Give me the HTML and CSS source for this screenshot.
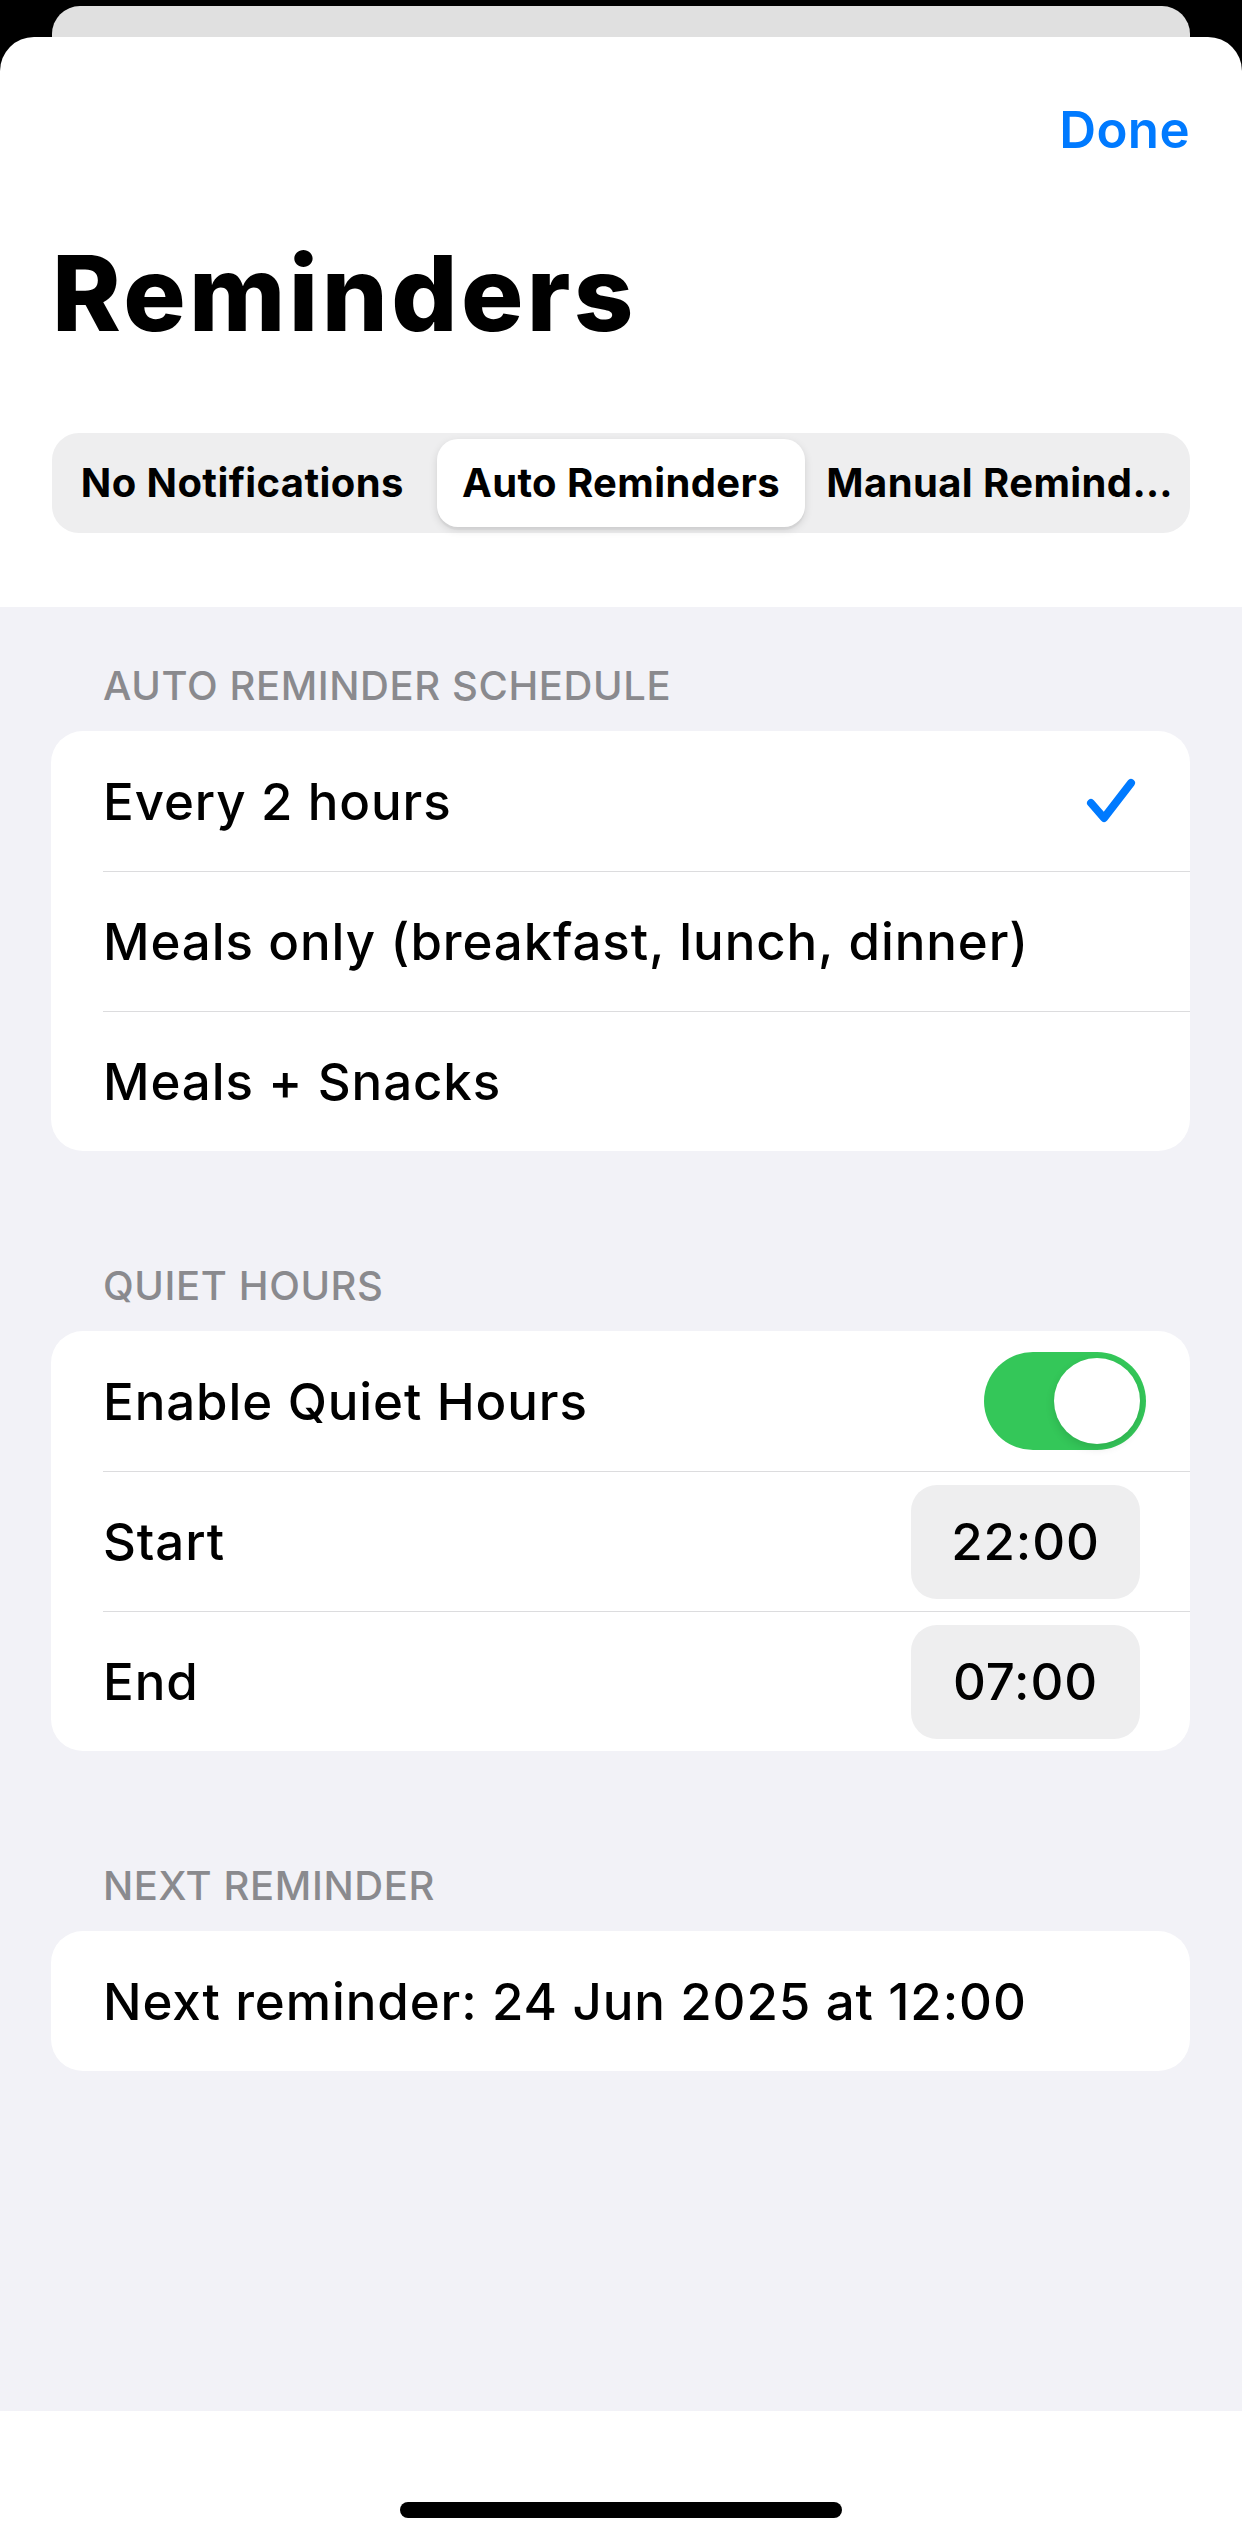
FILE: index.html
```html
<!DOCTYPE html>
<html lang="en">
<head>
  <meta charset="UTF-8">
  <meta name="viewport" content="width=device-width, initial-scale=1.0">
  <title>Reminders</title>
  <link rel="stylesheet" href="styles.css">
</head>
<body>
  <div class="screen">
    <div class="back-card"></div>

    <div class="sheet">
      <header class="sheet-header">
        <nav class="nav">
          <button class="done-btn" type="button">Done</button>
        </nav>
        <h1 class="title">Reminders</h1>

        <div class="segmented">
          <div class="segment">No Notifications</div>
          <div class="segment segment-active">Auto Reminders</div>
          <div class="segment" title="Manual Reminders">Manual Remind…</div>
        </div>
      </header>

      <main class="content">
        <section class="group">
          <h2 class="group-title">Auto Reminder Schedule</h2>
          <div class="card">
            <div class="row">
              <div class="row-inner">
                <span class="row-label">Every 2 hours</span>
                <svg class="check" width="50" height="48" viewBox="0 0 50 48" aria-hidden="true">
                  <path d="M5 26 L18 41 L45 6" fill="none" stroke="#007aff" stroke-width="8" stroke-linecap="round" stroke-linejoin="round"/>
                </svg>
              </div>
            </div>
            <div class="row">
              <div class="row-inner">
                <span class="row-label">Meals only (breakfast, lunch, dinner)</span>
              </div>
            </div>
            <div class="row">
              <div class="row-inner">
                <span class="row-label">Meals + Snacks</span>
              </div>
            </div>
          </div>
        </section>

        <section class="group">
          <h2 class="group-title">Quiet Hours</h2>
          <div class="card">
            <div class="row">
              <div class="row-inner">
                <span class="row-label">Enable Quiet Hours</span>
                <span class="toggle toggle-on"><span class="toggle-knob"></span></span>
              </div>
            </div>
            <div class="row">
              <div class="row-inner">
                <span class="row-label">Start</span>
                <span class="time-pill">22:00</span>
              </div>
            </div>
            <div class="row">
              <div class="row-inner">
                <span class="row-label">End</span>
                <span class="time-pill">07:00</span>
              </div>
            </div>
          </div>
        </section>

        <section class="group">
          <h2 class="group-title">Next Reminder</h2>
          <div class="card">
            <div class="row">
              <div class="row-inner">
                <span class="row-label">Next reminder: 24 Jun 2025 at 12:00</span>
              </div>
            </div>
          </div>
        </section>
      </main>

      <footer class="home-area">
        <div class="home-indicator"></div>
      </footer>
    </div>
  </div>
</body>
</html>
```

FILE: styles.css
```css
* {
    box-sizing: border-box;
}

body {
    margin: 0;
    background: #000;
    font-family: Inter, "Noto Sans", "Liberation Sans", sans-serif;
    color: #000;
}

.screen {
    width: 1242px;
    height: 2544px;
    display: flex;
    flex-direction: column;
    overflow: hidden;
    background: #000;
}

/* card peeking out behind the sheet */
.back-card {
    flex: none;
    height: 31px;
    margin: 6px 52px 0 52px;
    background: #e0e0e0;
    border-radius: 28px 28px 0 0;
}

.sheet {
    flex: 1;
    display: flex;
    flex-direction: column;
    background: #fff;
    border-radius: 34px 34px 0 0;
}

.sheet-header {
    padding: 62px 52px 74px 52px;
}

.nav {
    display: flex;
    justify-content: flex-end;
}

.done-btn {
    border: none;
    background: none;
    padding: 0;
    font-family: inherit;
    font-size: 51px;
    line-height: 61px;
    font-weight: 600;
    color: #007aff;
    letter-spacing: 0.4px;
}

.title {
    margin: 71px 0 0 0;
    font-size: 104px;
    line-height: 124px;
    font-weight: 800;
    letter-spacing: 3.4px;
}

.segmented {
    margin-top: 78px;
    height: 100px;
    padding: 6px;
    display: grid;
    grid-template-columns: 1fr 1fr 1fr;
    gap: 10px;
    background: #eeeeef;
    border-radius: 27px;
}

.segment {
    font-size: 40px;
    line-height: 88px;
    font-weight: 700;
    letter-spacing: 0.4px;
    text-align: center;
    white-space: nowrap;
}

.segment-active {
    background: #fff;
    border-radius: 21px;
    box-shadow: 0 3px 8px rgba(0, 0, 0, 0.12), 0 3px 1px rgba(0, 0, 0, 0.04);
}

.content {
    flex: 1;
    background: #f2f2f7;
    padding: 55px 52px 0 51px;
}

.group + .group {
    margin-top: 111px;
}

.group-title {
    margin: 0 0 21px 0;
    padding-left: 52px;
    font-size: 40px;
    line-height: 48px;
    font-weight: 500;
    letter-spacing: 0.6px;
    text-transform: uppercase;
    color: #8a8a8e;
}

.card {
    background: #fff;
    border-radius: 32px;
    overflow: hidden;
}

.row {
    padding-left: 52px;
}

.row-inner {
    height: 140px;
    display: flex;
    align-items: center;
    justify-content: space-between;
}

.row + .row .row-inner {
    border-top: 1px solid #dcdcde;
}

.row-label {
    font-size: 51px;
    font-weight: 500;
    letter-spacing: 0.9px;
}

.check {
    margin-right: 54px;
}

.toggle {
    position: relative;
    width: 162px;
    height: 98px;
    margin-right: 44px;
    border-radius: 49px;
    background: #e9e9eb;
}

.toggle-on {
    background: #34c759;
}

.toggle-knob {
    position: absolute;
    top: 6px;
    right: 6px;
    width: 86px;
    height: 86px;
    border-radius: 50%;
    background: #fff;
    box-shadow: 0 4px 10px rgba(0, 0, 0, 0.12);
}

.time-pill {
    width: 229px;
    height: 114px;
    margin-right: 50px;
    display: flex;
    align-items: center;
    justify-content: center;
    background: #eeeeef;
    border-radius: 26px;
    font-size: 51px;
    font-weight: 500;
    letter-spacing: 0.9px;
}

.home-area {
    flex: none;
    height: 133px;
    padding-top: 91px;
    display: flex;
    justify-content: center;
    background: #fff;
}

.home-indicator {
    width: 442px;
    height: 16px;
    border-radius: 8px;
    background: #000;
}
```
